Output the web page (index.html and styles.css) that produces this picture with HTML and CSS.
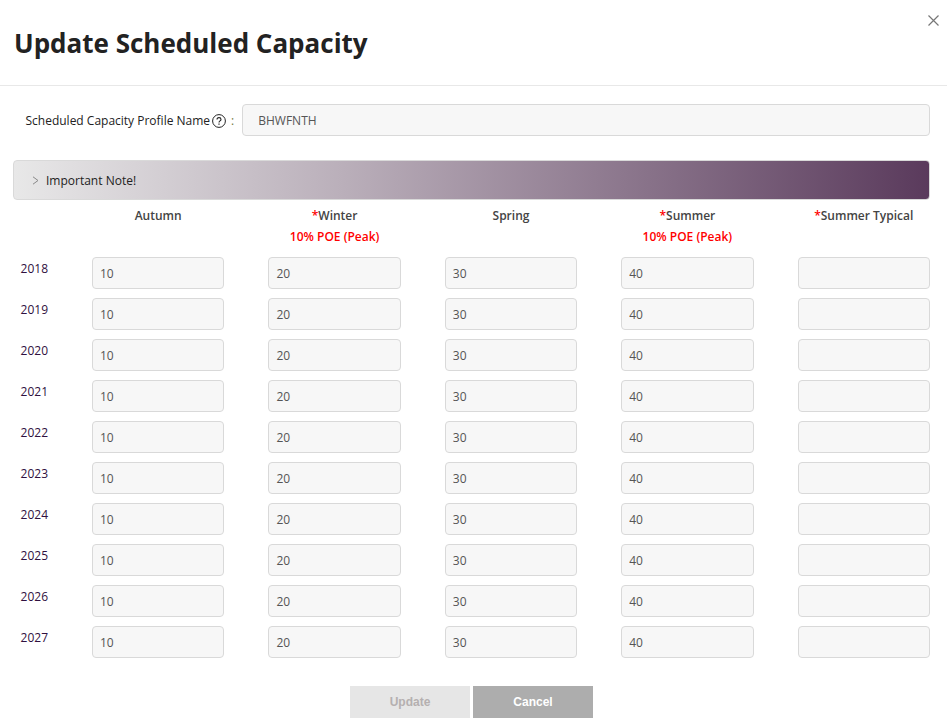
FILE: index.html
```html
<!DOCTYPE html>
<html lang="en">
<head>
    <meta charset="utf-8">
    <title>Update Scheduled Capacity</title>
    <link rel="stylesheet" href="styles.css">
</head>
<body>
    <div class="modal">
        <header class="modal-header">
            <h1>Update Scheduled Capacity</h1>
            <button class="close" type="button" aria-label="Close">
                <svg width="13" height="13" viewBox="0 0 13 13"><path d="M1.5 1.5l10 10M11.5 1.5l-10 10" fill="none" stroke="#777" stroke-width="1.2"/></svg>
            </button>
        </header>
        <form class="modal-body" id="capacityForm">
            <div class="profile">
                <label for="profileName">Scheduled Capacity Profile Name
                    <svg class="help" width="14" height="14" viewBox="0 0 14 14" fill="none" stroke="#222">
                        <circle cx="7" cy="7" r="6.4"/>
                        <path d="M5 5.6C5 4.3 5.8 3.6 7 3.6s2 .8 2 1.8c0 1.5-2 1.5-2 3.1" stroke-width="1.1"/>
                        <path d="M7 9.6v1.2" stroke-width="1.2"/>
                    </svg>
                    <span class="colon">:</span>
                </label>
                <input class="field profile-name" type="text" id="profileName" name="profileName" value="BHWFNTH" readonly>
            </div>
            <button class="note" type="button" aria-expanded="false">
                <svg width="7" height="9" viewBox="0 0 7 9"><path d="M1 .8l5 3.7-5 3.7" fill="none" stroke="#888"/></svg>
                Important Note!
            </button>
            <table class="capacity">
                <thead>
                    <tr>
                        <th class="year-col"></th>
                        <th>Autumn</th>
                        <th><span class="red">*</span>Winter<br><span class="red">10% POE (Peak)</span></th>
                        <th>Spring</th>
                        <th><span class="red">*</span>Summer<br><span class="red">10% POE (Peak)</span></th>
                        <th><span class="red">*</span>Summer Typical</th>
                    </tr>
                </thead>
                <tbody>
                    <tr>
                        <th>2018</th>
                        <td><input class="field" type="text" aria-label="2018 Autumn" value="10" readonly></td>
                        <td><input class="field" type="text" aria-label="2018 Winter" value="20" readonly></td>
                        <td><input class="field" type="text" aria-label="2018 Spring" value="30" readonly></td>
                        <td><input class="field" type="text" aria-label="2018 Summer" value="40" readonly></td>
                        <td><input class="field" type="text" aria-label="2018 Summer Typical" readonly></td>
                    </tr>
                    <tr>
                        <th>2019</th>
                        <td><input class="field" type="text" aria-label="2019 Autumn" value="10" readonly></td>
                        <td><input class="field" type="text" aria-label="2019 Winter" value="20" readonly></td>
                        <td><input class="field" type="text" aria-label="2019 Spring" value="30" readonly></td>
                        <td><input class="field" type="text" aria-label="2019 Summer" value="40" readonly></td>
                        <td><input class="field" type="text" aria-label="2019 Summer Typical" readonly></td>
                    </tr>
                    <tr>
                        <th>2020</th>
                        <td><input class="field" type="text" aria-label="2020 Autumn" value="10" readonly></td>
                        <td><input class="field" type="text" aria-label="2020 Winter" value="20" readonly></td>
                        <td><input class="field" type="text" aria-label="2020 Spring" value="30" readonly></td>
                        <td><input class="field" type="text" aria-label="2020 Summer" value="40" readonly></td>
                        <td><input class="field" type="text" aria-label="2020 Summer Typical" readonly></td>
                    </tr>
                    <tr>
                        <th>2021</th>
                        <td><input class="field" type="text" aria-label="2021 Autumn" value="10" readonly></td>
                        <td><input class="field" type="text" aria-label="2021 Winter" value="20" readonly></td>
                        <td><input class="field" type="text" aria-label="2021 Spring" value="30" readonly></td>
                        <td><input class="field" type="text" aria-label="2021 Summer" value="40" readonly></td>
                        <td><input class="field" type="text" aria-label="2021 Summer Typical" readonly></td>
                    </tr>
                    <tr>
                        <th>2022</th>
                        <td><input class="field" type="text" aria-label="2022 Autumn" value="10" readonly></td>
                        <td><input class="field" type="text" aria-label="2022 Winter" value="20" readonly></td>
                        <td><input class="field" type="text" aria-label="2022 Spring" value="30" readonly></td>
                        <td><input class="field" type="text" aria-label="2022 Summer" value="40" readonly></td>
                        <td><input class="field" type="text" aria-label="2022 Summer Typical" readonly></td>
                    </tr>
                    <tr>
                        <th>2023</th>
                        <td><input class="field" type="text" aria-label="2023 Autumn" value="10" readonly></td>
                        <td><input class="field" type="text" aria-label="2023 Winter" value="20" readonly></td>
                        <td><input class="field" type="text" aria-label="2023 Spring" value="30" readonly></td>
                        <td><input class="field" type="text" aria-label="2023 Summer" value="40" readonly></td>
                        <td><input class="field" type="text" aria-label="2023 Summer Typical" readonly></td>
                    </tr>
                    <tr>
                        <th>2024</th>
                        <td><input class="field" type="text" aria-label="2024 Autumn" value="10" readonly></td>
                        <td><input class="field" type="text" aria-label="2024 Winter" value="20" readonly></td>
                        <td><input class="field" type="text" aria-label="2024 Spring" value="30" readonly></td>
                        <td><input class="field" type="text" aria-label="2024 Summer" value="40" readonly></td>
                        <td><input class="field" type="text" aria-label="2024 Summer Typical" readonly></td>
                    </tr>
                    <tr>
                        <th>2025</th>
                        <td><input class="field" type="text" aria-label="2025 Autumn" value="10" readonly></td>
                        <td><input class="field" type="text" aria-label="2025 Winter" value="20" readonly></td>
                        <td><input class="field" type="text" aria-label="2025 Spring" value="30" readonly></td>
                        <td><input class="field" type="text" aria-label="2025 Summer" value="40" readonly></td>
                        <td><input class="field" type="text" aria-label="2025 Summer Typical" readonly></td>
                    </tr>
                    <tr>
                        <th>2026</th>
                        <td><input class="field" type="text" aria-label="2026 Autumn" value="10" readonly></td>
                        <td><input class="field" type="text" aria-label="2026 Winter" value="20" readonly></td>
                        <td><input class="field" type="text" aria-label="2026 Spring" value="30" readonly></td>
                        <td><input class="field" type="text" aria-label="2026 Summer" value="40" readonly></td>
                        <td><input class="field" type="text" aria-label="2026 Summer Typical" readonly></td>
                    </tr>
                    <tr>
                        <th>2027</th>
                        <td><input class="field" type="text" aria-label="2027 Autumn" value="10" readonly></td>
                        <td><input class="field" type="text" aria-label="2027 Winter" value="20" readonly></td>
                        <td><input class="field" type="text" aria-label="2027 Spring" value="30" readonly></td>
                        <td><input class="field" type="text" aria-label="2027 Summer" value="40" readonly></td>
                        <td><input class="field" type="text" aria-label="2027 Summer Typical" readonly></td>
                    </tr>
                </tbody>
            </table>
            <div class="actions">
                <button class="btn update" type="submit" disabled>Update</button>
                <button class="btn cancel" type="button">Cancel</button>
            </div>
        </form>
    </div>
</body>
</html>
```
FILE: styles.css
```css
* {
    box-sizing: border-box;
}
body {
    margin: 0;
    background-color: #fff;
    color: #222;
    font-family: "Open Sans", "Noto Sans", sans-serif;
    font-size: 12px;
}
button {
    padding: 0;
    border: none;
    font-family: inherit;
    cursor: pointer;
}
.modal-header {
    display: flex;
    justify-content: space-between;
    align-items: flex-start;
    padding: 14px 7px 13px 14px;
    border-bottom: 1px solid #e8e8e8;
}
h1 {
    margin: 0;
    font-size: 26px;
    line-height: 58px;
}
.close {
    display: flex;
    background: none;
}
.modal-body {
    padding: 18px 17px 8px 13px;
}
.profile {
    display: flex;
    align-items: center;
    margin-bottom: 24px;
}
.profile label {
    display: flex;
    align-items: center;
    justify-content: flex-end;
    flex: 0 0 25%;
    padding-right: 8px;
    font-size: 12px;
    white-space: nowrap;
}
.help {
    margin: 2px 5px 0 2px;
}
.colon {
    color: #774;
}
.field {
    display: block;
    width: 100%;
    height: 32px;
    padding: 0 7px;
    border: 1px solid #d9d9d9;
    border-radius: 4px;
    background-color: #f7f7f7;
    color: #555;
    font-family: inherit;
    font-size: 12px;
}
.profile-name {
    flex: 1;
    padding: 0 15px;
}
.note {
    display: flex;
    align-items: center;
    gap: 7px;
    width: 100%;
    height: 40px;
    padding-left: 18px;
    border: 1px solid #d9d9d9;
    border-radius: 4px;
    background: linear-gradient(to right, #e8e8e8, #baafba 36%, #5a3a5c) border-box;
    color: #222;
    font-size: 12px;
    font-weight: 500;
}
.capacity {
    width: 100%;
    margin-top: 5px;
    border-collapse: collapse;
    table-layout: fixed;
}
.capacity th,
.capacity td {
    padding: 0 0 9px 44px;
    vertical-align: top;
}
.capacity thead th {
    padding-bottom: 10px;
    color: #444;
    font-weight: 600;
    line-height: 21px;
}
.capacity .year-col {
    width: 35px;
    padding-left: 0;
}
.capacity tbody th {
    padding-left: 0;
    color: #301040;
    font-weight: 400;
    line-height: 24px;
    text-align: right;
}
.capacity .red {
    color: #f00;
}
.actions {
    display: flex;
    justify-content: center;
    gap: 3px;
    margin-top: 19px;
}
.btn {
    width: 120px;
    height: 32px;
    font-family: "Liberation Sans", Arial, sans-serif;
    font-size: 12px;
    font-weight: bold;
}
.update {
    background-color: #e6e6e6;
    color: #b5b0b0;
}
.cancel {
    background-color: #adadad;
    color: #fff;
}
```
